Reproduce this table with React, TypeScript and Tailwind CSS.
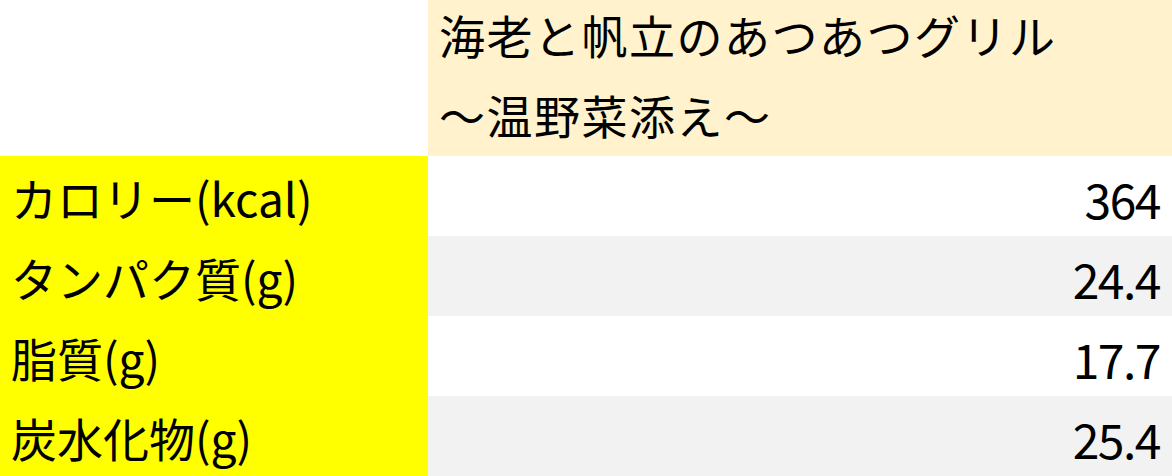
const rows = [
  { label: 'カロリー(kcal)', value: '364', shade: false },
  { label: 'タンパク質(g)', value: '24.4', shade: true },
  { label: '脂質(g)', value: '17.7', shade: false },
  { label: '炭水化物(g)', value: '25.4', shade: true },
];

export default function App() {
  return (
    <div
      className="w-[1172px] h-[476px] bg-white text-black overflow-hidden"
      style={{ fontFamily: '"Noto Sans CJK JP", "Noto Sans", sans-serif' }}
    >
      <div className="grid grid-cols-[428px_1fr]">
        <div className="h-[156px] bg-white" />
        <div className="h-[156px] bg-[#fff2cc] pl-[11px] text-[46px] leading-[80px] tracking-[1.5px] overflow-hidden">
          <div className="-mt-[6px]">
            <div>海老と帆立のあつあつグリル</div>
            <div>～温野菜添え～</div>
          </div>
        </div>

        {rows.map((r) => (
          <div key={r.label} className="contents">
            <div className="h-[80px] bg-[#ffff00] flex items-center pl-[11px] pt-[3px] text-[46px] whitespace-nowrap">
              {r.label}
            </div>
            <div
              className={`h-[80px] flex items-center justify-end pr-[12px] pt-[3px] text-[48px] tracking-[-1.5px] ${
                r.shade ? 'bg-[#f2f2f2]' : 'bg-white'
              }`}
            >
              {r.value}
            </div>
          </div>
        ))}
      </div>
    </div>
  );
}
